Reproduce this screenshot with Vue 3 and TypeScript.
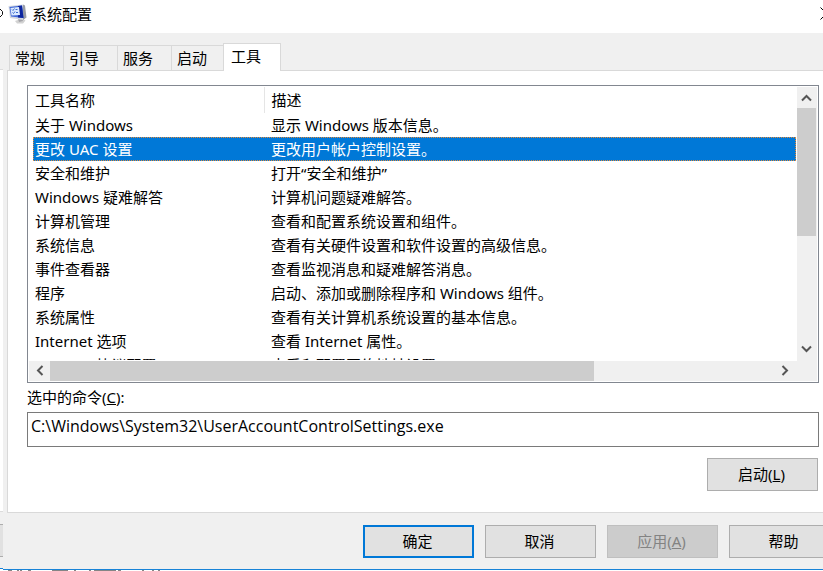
<script setup lang="ts">
import { ref } from 'vue'

interface Tool {
  name: string
  description: string
  command: string
}

const tabs: string[] = ['常规', '引导', '服务', '启动', '工具']
const activeTab = ref(4)

const sys = 'C:\\Windows\\System32\\'
const tools: Tool[] = [
  { name: '关于 Windows', description: '显示 Windows 版本信息。', command: sys + 'winver.exe' },
  { name: '更改 UAC 设置', description: '更改用户帐户控制设置。', command: sys + 'UserAccountControlSettings.exe' },
  { name: '安全和维护', description: '打开“安全和维护”', command: sys + 'wscui.cpl' },
  { name: 'Windows 疑难解答', description: '计算机问题疑难解答。', command: sys + 'control.exe' },
  { name: '计算机管理', description: '查看和配置系统设置和组件。', command: sys + 'compmgmt.msc' },
  { name: '系统信息', description: '查看有关硬件设置和软件设置的高级信息。', command: sys + 'msinfo32.exe' },
  { name: '事件查看器', description: '查看监视消息和疑难解答消息。', command: sys + 'eventvwr.exe' },
  { name: '程序', description: '启动、添加或删除程序和 Windows 组件。', command: sys + 'appwiz.cpl' },
  { name: '系统属性', description: '查看有关计算机系统设置的基本信息。', command: sys + 'control.exe' },
  { name: 'Internet 选项', description: '查看 Internet 属性。', command: sys + 'inetcpl.cpl' },
  { name: 'Internet 协议配置', description: '查看和配置网络地址设置。', command: sys + 'ipconfig.exe' },
]
const selected = ref(1)
</script>

<template>
  <div class="desktop">
    <div class="behind" aria-hidden="true">
      <div class="behind-title">
        <svg width="3" height="33" viewBox="0 0 3 33"><path d="M0 9L2.500 11.500v3L0 17" fill="none" stroke="#111" /></svg>
      </div>
      <div class="behind-tabs"></div>
      <div class="behind-page"></div>
      <div class="behind-button"></div>
      <div class="behind-edge"></div>
    </div>

    <main class="dialog">
      <header class="titlebar">
        <svg class="app-icon" width="20" height="20" viewBox="0 0 20 20" aria-hidden="true">
          <path d="M7 17l7-2.500 3.500 2L15 19.500H9z" fill="#d2d2d2" />
          <path d="M10 15l4-1 1 3-4 1z" fill="#a4a4a8" />
          <path d="M.5 2L15 .5l2.500 13-2.500 2.500L2 14z" fill="#d3d8e2" />
          <path d="M15 .5l2 1 1.500 12-3.500 2.500z" fill="#999da6" />
          <path d="M1.500 3L14 1.500l1.500 12.500L3 12.500z" fill="#4068d8" />
          <path d="M10 2l4-.5L15.500 14 10 13.500z" fill="#0c259f" />
          <path d="M2.500 4l8.500-1 1 8-8.500.5z" fill="#dcebff" />
          <path d="M4 5.500l1 1L6.500 4.500M4.500 8.500l1 1L7 7.500M7.500 5.500h2M8 8.500h2" fill="none" stroke="#3c6bd0" />
        </svg>
        <h1>系统配置</h1>
        <button class="close" type="button" aria-label="关闭">
          <svg width="13" height="13" viewBox="0 0 13 13"><path d="M.5.5l12 12m0-12l-12 12" fill="none" stroke="#000" /></svg>
        </button>
      </header>

      <div class="tabs" role="tablist">
        <button
          v-for="(tab, i) in tabs"
          :key="tab"
          type="button"
          role="tab"
          class="tab"
          :class="{ active: i === activeTab }"
          :aria-selected="i === activeTab"
          @click="activeTab = i"
        >{{ tab }}</button>
      </div>

      <section class="page" role="tabpanel">
        <div class="list">
          <div class="viewport">
            <table>
              <colgroup><col class="name-col" /><col /></colgroup>
              <thead>
                <tr><th scope="col">工具名称</th><th scope="col">描述</th></tr>
              </thead>
              <tbody>
                <tr
                  v-for="(tool, i) in tools"
                  :key="tool.name"
                  :class="{ selected: i === selected }"
                  @click="selected = i"
                >
                  <td>{{ tool.name }}</td>
                  <td>{{ tool.description }}</td>
                </tr>
              </tbody>
            </table>
          </div>
          <div class="vbar">
            <button type="button" aria-label="向上滚动">
              <svg width="11" height="8" viewBox="0 0 11 8"><path d="M1 6.500l4.500-4.500 4.500 4.500" /></svg>
            </button>
            <div class="vthumb"></div>
            <button class="end" type="button" aria-label="向下滚动">
              <svg width="11" height="8" viewBox="0 0 11 8"><path d="M1 1.500l4.500 4.500 4.500-4.500" /></svg>
            </button>
          </div>
          <div class="hbar">
            <button type="button" aria-label="向左滚动">
              <svg width="8" height="11" viewBox="0 0 8 11"><path d="M6.500 1l-4.500 4.500 4.500 4.500" /></svg>
            </button>
            <div class="hthumb"></div>
            <button class="end" type="button" aria-label="向右滚动">
              <svg width="8" height="11" viewBox="0 0 8 11"><path d="M1.500 1l4.500 4.500-4.500 4.500" /></svg>
            </button>
          </div>
        </div>

        <label for="command">选中的命令(<u>C</u>):</label>
        <input id="command" type="text" readonly :value="tools[selected].command" />
        <button class="push launch" type="button">启动(<u>L</u>)</button>
      </section>

      <footer class="actions">
        <button class="push default" type="button">确定</button>
        <button class="push" type="button">取消</button>
        <button class="push" type="button" disabled>应用(<u>A</u>)</button>
        <button class="push" type="button">帮助</button>
      </footer>
    </main>

    <svg class="below" width="165" height="1" viewBox="0 0 165 1" aria-hidden="true">
      <path d="M8 0h4v1H8zM17 0h2v1h-2zM20 0h2v1h-2zM28 0h3v1h-3zM52 0h16v1H52zM74 0h2v1h-2zM89 0h2v1h-2zM94 0h22v1H94zM118 0h3v1h-3zM142 0h2v1h-2zM152 0h2v1h-2zM158 0h2v1h-2z" fill="#858585" />
    </svg>
  </div>
</template>

<style>
body {
  margin: 0;
  background: #fff;
}
</style>

<style scoped>
* {
  box-sizing: border-box;
}

.desktop {
  display: grid;
  grid-template-columns: 3px minmax(0, 1fr);
  grid-template-rows: 1fr 1px;
  min-height: 100vh;
  overflow: hidden;
  font: 15px/20px "Noto Sans", "Noto Sans CJK SC", sans-serif;
  color: #000;
}

button,
input {
  font: inherit;
  color: inherit;
}

button {
  padding: 0;
  border: 0;
  background: none;
}

.behind {
  display: flex;
  flex-direction: column;
  background: #f0f0f0;
}

.behind svg,
.below {
  display: block;
}

.below {
  grid-column: 1 / -1;
}

.behind-title {
  height: 33px;
  background: #fff;
}

.behind-tabs {
  height: 36px;
}

.behind-page {
  flex: 1;
  border: solid #dcdcdc;
  border-width: 1px 0;
  background: #fff;
}

.behind-button {
  height: 33px;
  margin: 12px 0 11px;
  border: solid #adadad;
  border-width: 1px 0;
  background: #e1e1e1;
}

.behind-edge {
  height: 2px;
  border-top: 1px solid #1883d7;
  background: #fff;
}

.dialog {
  display: flex;
  flex-direction: column;
  border-bottom: 1px solid #1883d7;
  background: #f0f0f0;
}

.titlebar {
  display: flex;
  align-items: center;
  gap: 4px;
  height: 33px;
  margin-right: -10px;
  padding: 0 0 6px 5px;
  background: #fff;
}

.titlebar h1 {
  flex: 1;
  margin: 0;
  font-size: 15px;
  font-weight: 400;
}

.close,
.close svg {
  display: block;
}

.tabs {
  display: flex;
  align-items: flex-end;
  height: 38px;
  margin-bottom: -1px;
  padding-left: 6px;
}

.tab {
  width: 54px;
  height: 26px;
  padding-left: 5px;
  border: 1px solid #d9d9d9;
  border-right: 0;
  text-align: left;
}

.tab.active {
  position: relative;
  z-index: 1;
  width: 58px;
  height: 28px;
  margin-left: -2px;
  padding: 0 0 4px 7px;
  border-right: 1px solid #d9d9d9;
  border-bottom: 0;
  background: #fff;
}

.page {
  display: flex;
  flex: 1;
  flex-direction: column;
  margin-left: 4px;
  padding: 14px 4px 21px 19px;
  border: solid #d9d9d9;
  border-width: 1px 0 1px 1px;
  background: #fff;
}

.list {
  display: grid;
  flex: 1;
  grid-template-columns: minmax(0, 1fr) 20px;
  grid-template-rows: 274px 20px;
  padding: 1px 1px 1px 5px;
  border: 1px solid #828790;
}

.viewport {
  margin: 0 1px 1px 0;
  overflow: hidden;
}

table {
  width: 100%;
  border-collapse: collapse;
  table-layout: fixed;
}

.name-col {
  width: 231px;
}

th,
td {
  height: 24px;
  padding: 0 0 0 2px;
  font-weight: 400;
  text-align: left;
  white-space: nowrap;
}

th {
  height: 26px;
}

th + th {
  border-left: 1px solid #e5e5e5;
}

th + th,
td + td {
  padding-left: 7px;
}

.selected {
  outline: 1px dotted #e08a3c;
  outline-offset: -1px;
  background: #0078d7;
  color: #fff;
}

.vbar,
.hbar {
  display: flex;
  background: #f0f0f0;
}

.vbar {
  flex-direction: column;
}

.hbar {
  grid-column: 1 / -1;
  margin-left: -4px;
  padding-right: 22px;
}

.vbar button,
.hbar button {
  display: grid;
  place-items: center;
  width: 19px;
  height: 21px;
}

.hbar button {
  width: 21px;
  height: 19px;
}

.vbar .end {
  margin-top: auto;
  padding-bottom: 3px;
}

.hbar .end {
  margin-left: auto;
}

.vbar path,
.hbar path {
  fill: none;
  stroke: #555;
  stroke-width: 2;
}

.vthumb {
  height: 128px;
  margin-right: 1px;
  background: #cdcdcd;
}

.hthumb {
  width: 71%;
  background: #cdcdcd;
}

label {
  margin: 4px 0 5px;
}

input {
  width: 100%;
  height: 35px;
  padding: 0 3px 8px;
  border: 1px solid #7a7a7a;
  border-radius: 0;
  outline: 0;
  background: #fff;
  font-family: "Open Sans", "Noto Sans CJK SC", sans-serif;
  font-size: 16px;
}

.push {
  flex: none;
  width: 111px;
  height: 33px;
  padding: 0 2px 2px 0;
  border: 1px solid #adadad;
  background: #e1e1e1;
}

.launch {
  align-self: flex-end;
  margin: 11px 1px 0 0;
}

.default {
  border: 2px solid #0078d7;
}

.push:disabled {
  border-color: #bfbfbf;
  background: #ccc;
  color: #838383;
}

.actions {
  display: flex;
  justify-content: flex-end;
  gap: 11px;
  margin-right: -17px;
  padding: 12px 0 11px;
}
</style>
